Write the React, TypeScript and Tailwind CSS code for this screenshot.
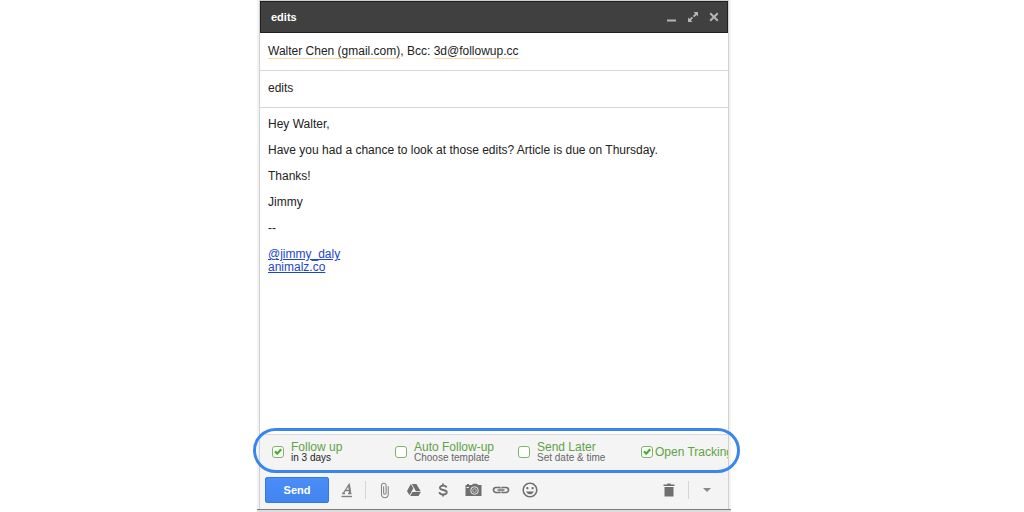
import type { ReactNode } from "react";
import { MdAttachFile, MdInsertEmoticon } from "react-icons/md";

function IconButton({ label, className, children }: { label: string; className: string; children: ReactNode }) {
  return (
    <button type="button" aria-label={label} className={`flex h-5 shrink-0 items-center justify-center text-[#6f6f6f] ${className}`}>
      {children}
    </button>
  );
}

type FollowUpOption = {
  id: string;
  title: string;
  detail?: string;
  detailClass?: string;
  checked: boolean;
};

const options: FollowUpOption[] = [
  { id: "follow-up", title: "Follow up", detail: "in 3 days", detailClass: "text-[#222222]", checked: true },
  { id: "auto-follow-up", title: "Auto Follow-up", detail: "Choose template", detailClass: "text-[#666666]", checked: false },
  { id: "send-later", title: "Send Later", detail: "Set date & time", detailClass: "text-[#666666]", checked: false },
  { id: "open-tracking", title: "Open Tracking", checked: true },
];

function Option({ id, title, detail, detailClass, checked }: FollowUpOption) {
  return (
    <div className={`flex items-center ${detail ? "gap-[7px]" : "gap-[2px]"}`}>
      <span className="relative flex size-3 shrink-0">
        <input
          id={id}
          type="checkbox"
          defaultChecked={checked}
          className="peer size-3 appearance-none rounded-[3px] border border-[#7fb56a] bg-white"
        />
        <svg viewBox="0 0 12 12" className="pointer-events-none absolute inset-0 hidden size-3 peer-checked:block" fill="none">
          <path d="M3 5.300 5.200 7.700 9.200 3.300" stroke="#45b025" strokeWidth="2.200" />
        </svg>
      </span>
      <label htmlFor={id} className="flex flex-col whitespace-nowrap">
        <span className="text-xs leading-3 text-[#5fa344]">{title}</span>
        {detail && <span className={`text-[10px] leading-[10px] ${detailClass}`}>{detail}</span>}
      </label>
    </div>
  );
}

export default function App() {
  return (
    <main className="flex min-h-screen overflow-hidden bg-white pl-[260px] font-['Liberation_Sans',Arial,sans-serif] text-xs text-[#222222]">
      <section className="flex w-full max-w-[468px] flex-col pt-px">
        <div className="flex flex-1 flex-col bg-white shadow-[0_0_0_1px_#d0d0d0,0_0_0_3px_#f3f3f3]">
          <header className="flex h-8 items-center border border-[#202020] bg-[#404040] pr-[7px] pl-[10px]">
            <h1 className="flex-1 text-[11px] leading-4 font-bold text-white">edits</h1>
            <div className="flex items-center gap-[9px] text-[#b5b5b5]">
              <button type="button" aria-label="Minimize">
                <svg viewBox="0 0 12 12" className="size-3">
                  <path d="M1 8.500h9v2H1z" fill="currentColor" />
                </svg>
              </button>
              <button type="button" aria-label="Full screen">
                <svg viewBox="0 0 12 12" className="size-3">
                  <path d="M6.500 1H11v4.500L9.500 4 7.200 6.300 5.900 5 8.100 2.600zM1 6.500 2.500 8 4.700 5.800 6 7.100 3.900 9.400 5.500 11H1z" fill="currentColor" />
                </svg>
              </button>
              <button type="button" aria-label="Close">
                <svg viewBox="0 0 12 12" className="size-3">
                  <path d="m2.200 2.200 7.600 7.600m0-7.600-7.600 7.600" stroke="currentColor" strokeWidth="2" />
                </svg>
              </button>
            </div>
          </header>

          <div className="flex h-[38px] items-center border-b border-[#d8d8d8] px-2">
            <p className="leading-[13px] whitespace-nowrap">
              <span className="border-b border-[#f5d9a0]">Walter Chen (gmail.com)</span>, Bcc:{" "}
              <span className="border-b border-[#f5d9a0]">3d@followup.cc</span>
            </p>
          </div>
          <div className="flex h-[37px] items-center border-b border-[#d8d8d8] px-2 pb-0.5">
            <input aria-label="Subject" defaultValue="edits" className="h-4 w-full bg-transparent leading-4 outline-none" />
          </div>

          <div className="flex flex-1 flex-col gap-[13px] px-2 pt-[10px] leading-[13px]">
            <p>Hey Walter,</p>
            <p>Have you had a chance to look at those edits? Article is due on Thursday.</p>
            <p>Thanks!</p>
            <p>Jimmy</p>
            <p>--</p>
            <p className="flex flex-col items-start text-[#2244cc]">
              <a href="#jimmy_daly" className="underline">@jimmy_daly</a>
              <a href="#animalz" className="underline">animalz.co</a>
            </p>
          </div>

          <div className="relative">
            <div className="grid h-[37px] grid-cols-[123px_123px_123px_1fr] overflow-hidden border-t border-[#d8d8d8] bg-[#f4f4f4] pb-0.5 pl-3">
              {options.map((option) => (
                <Option key={option.id} {...option} />
              ))}
            </div>
            <div className="pointer-events-none absolute -top-[6px] -right-3 -bottom-[2px] -left-[7px] rounded-[23px] border-3 border-[#3b86ee]" />
          </div>

          <footer className="flex h-[38px] items-center bg-[#f4f4f4] pl-[5px]">
            <button type="button" className="h-[26px] w-16 rounded-xs border border-[#3079ed] bg-linear-to-b from-[#4b8df9] to-[#4285ee] text-[11px] font-bold text-white">
              Send
            </button>
            <IconButton label="Formatting options" className="ml-2 w-5">
              <svg viewBox="0 0 14 16" className="h-4 w-3.5" fill="none" stroke="#808080">
                <path d="M2 11.500h3M8 11.500h3.500M3.200 11.500 9 2.500l1.200 9M5.200 8.500H9.700" strokeWidth="1.300" />
                <path d="M9 2.500l1.200 9" strokeWidth="2" />
                <path d="M1.500 14.500h10.500" strokeWidth="1.400" />
              </svg>
            </IconButton>
            <span className="ml-2 h-[18px] w-px bg-[#d5d5d5]" />
            <IconButton label="Attach files" className="ml-2 w-5">
              <MdAttachFile className="size-[17px] text-[#858585]" />
            </IconButton>
            <IconButton label="Insert files using Drive" className="ml-[10px] w-5">
              <svg viewBox="0 0 16 14" className="h-3.5 w-4" fill="currentColor">
                <path d="M4.800 1 7.300 5.200 3.500 12.200 1 7.900z" />
                <path d="M5.800 1h4.600l4.300 7.200H9.900z" />
                <path d="M6.400 9h8.400l-2.300 4H4.200z" />
              </svg>
            </IconButton>
            <IconButton label="Insert money" className="ml-[9px] w-5">
              <svg viewBox="0 0 10 14" className="h-3.5 w-2.5" fill="none" stroke="currentColor" strokeWidth="1.800">
                <path d="M8.500 4.500C8.300 3.200 7 2.600 5.100 2.600 3.200 2.600 1.900 3.400 1.900 4.700c0 3.200 6.900 1.400 6.900 4.600 0 1.400-1.500 2.200-3.600 2.200S1.500 10.700 1.300 9.200M5 .4v2.200M5 11.400v2.200" />
              </svg>
            </IconButton>
            <IconButton label="Insert photo" className="ml-[10px] w-5">
              <svg viewBox="0 0 17 14" className="h-3.5 w-[17px]" fill="none">
                <path d="M.5 2H2V1h2v1h3l1-1.300h4L13 2h3.500v11H.5z" fill="currentColor" />
                <circle cx="9.500" cy="7.500" r="3.800" stroke="#e8e8e8" />
                <circle cx="9.500" cy="7.500" r="1.800" stroke="#c4c4c4" />
                <path d="M1.500 4.500h2.500" stroke="#e8e8e8" />
              </svg>
            </IconButton>
            <IconButton label="Insert link" className="ml-2 w-5">
              <svg viewBox="0 0 18 8" className="h-2 w-[18px]" fill="none" stroke="currentColor" strokeWidth="1.700">
                <path d="M7.800 2.600V1.500H4a2.500 2.500 0 0 0 0 5h3.800V5.400M10.200 2.600V1.500H14a2.500 2.500 0 0 1 0 5h-3.800V5.400M5.500 4h7" />
              </svg>
            </IconButton>
            <IconButton label="Insert emoticon" className="ml-[9px] w-5">
              <MdInsertEmoticon className="size-[18px]" />
            </IconButton>
            <IconButton label="Discard draft" className="ml-auto w-5">
              <svg viewBox="0 0 12 14" className="h-3.5 w-3" fill="currentColor">
                <path d="M.5 1.500H4L4.500.5h3l.5 1h3.500V3H.5zM1.500 4h9v9.500h-9z" />
              </svg>
            </IconButton>
            <span className="ml-[9px] h-[18px] w-px bg-[#d5d5d5]" />
            <IconButton label="More options" className="mr-[11px] ml-2 w-5">
              <svg viewBox="0 0 8 4" className="h-1 w-2" fill="#888888">
                <path d="M0 0h8L4 4z" />
              </svg>
            </IconButton>
          </footer>
        </div>
        <div className="relative -mx-[3px] h-[3px] border-t border-[#7c7c7c] bg-[#dddddd]" />
      </section>
    </main>
  );
}
